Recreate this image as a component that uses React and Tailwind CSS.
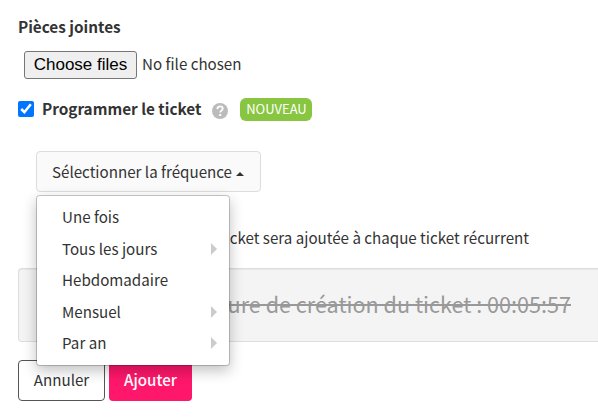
import { useState } from 'react';

const FREQUENCIES = [
  { label: 'Une fois', sub: false },
  { label: 'Tous les jours', sub: true },
  { label: 'Hebdomadaire', sub: false },
  { label: 'Mensuel', sub: true },
  { label: 'Par an', sub: true },
];

function FrequencyMenu() {
  return (
    <ul className="absolute left-0 top-[44px] z-10 w-[194px] h-[171px] pt-[5px] bg-white border border-black/20 bg-clip-padding rounded shadow-[0_5px_14px_rgba(0,0,0,0.24)]">
      {FREQUENCIES.map((item) => (
        <li key={item.label} className="flex items-center justify-between h-[31.5px] pl-[25px] pr-3">
          <span className="pb-px">{item.label}</span>
          {item.sub && (
            <span className="mt-px border-y-[6px] border-y-transparent border-l-[6px] border-l-[#cccccc]" />
          )}
        </li>
      ))}
    </ul>
  );
}

export default function App() {
  const [scheduled, setScheduled] = useState(true);
  const [open, setOpen] = useState(true);

  return (
    <div className="w-[598px] h-[417px] pl-[18px] overflow-hidden bg-white text-[#333333] text-[15.15px] leading-6 whitespace-nowrap font-['Noto_Sans_CJK_SC','Noto_Sans',sans-serif]">
      <div className="pt-[14px] h-[51px] font-bold text-[15.3px]">Pièces jointes</div>

      <div className="flex items-center h-7 pl-1.5">
        <button className="w-[113px] h-7 pb-0.5 border border-[#767676] rounded-[3px] bg-[#efefef] text-black text-[17px] leading-none font-['Liberation_Sans',sans-serif]">
          Choose files
        </button>
        <span className="ml-[5px] pb-1">No file chosen</span>
      </div>

      <div className="flex items-center h-6 mt-[18px]">
        <label className="flex items-center font-bold text-[15.3px]">
          <input
            type="checkbox"
            checked={scheduled}
            onChange={(e) => setScheduled(e.target.checked)}
            className="w-4 h-4 mr-2 accent-[#0075ff]"
          />
          <span className="-mt-0.5">Programmer le ticket</span>
        </label>
        <svg viewBox="0 0 16 16" className="w-4 h-4 ml-[11px] mt-[3px] shrink-0">
          <circle cx="8" cy="8" r="8" fill="#bbbbbb" />
          <path d="M5.3 6.1C5.4 4.3 6.4 3.4 8.1 3.4c1.6 0 2.6 1 2.6 2.3 0 1.9-2.5 2-2.5 3.9" fill="none" stroke="#fff" strokeWidth="1.8" />
          <rect x="7.2" y="11" width="2" height="2" fill="#fff" />
        </svg>
        <span className="ml-3 w-[72px] h-[23px] rounded-md bg-[#88c540] text-white text-[13px] leading-[22px] text-center">
          NOUVEAU
        </span>
      </div>

      <div className="relative ml-[18px] mt-[30px] w-[225px] h-[41px]">
        <button
          onClick={() => setOpen(!open)}
          className="flex items-center w-full h-full pl-[15px] border border-[#dddddd] rounded bg-[#fafafa]"
        >
          <span className="pb-0.5">Sélectionner la fréquence</span>
          <span className="ml-1 mt-1 border-x-[4.5px] border-x-transparent border-b-[4px] border-b-[#333333]" />
        </button>
        {open && <FrequencyMenu />}
      </div>

      <div className="flex justify-end mt-[33px] w-[511px] h-6">
        <span>La note du ticket sera ajoutée à chaque ticket récurrent</span>
      </div>

      <div className="mt-[19px] h-[74px] pr-[27px] pb-0.5 flex items-center justify-end border border-r-0 rounded-l border-[#dddddd] bg-[#f4f4f4] text-[#999999] text-[21.6px] shadow-[inset_0_1px_1px_rgba(0,0,0,0.05)]">
        <span className="line-through decoration-2">Heure de création du ticket : 00:05:57</span>
      </div>

      <div className="flex gap-1 mt-[18px]">
        <button className="w-[87px] h-[41px] pb-[3px] border border-[#555555] rounded">Annuler</button>
        <button className="w-[83px] h-[41px] pb-[3px] rounded bg-[#ff176b] text-white font-medium">Ajouter</button>
      </div>
    </div>
  );
}
